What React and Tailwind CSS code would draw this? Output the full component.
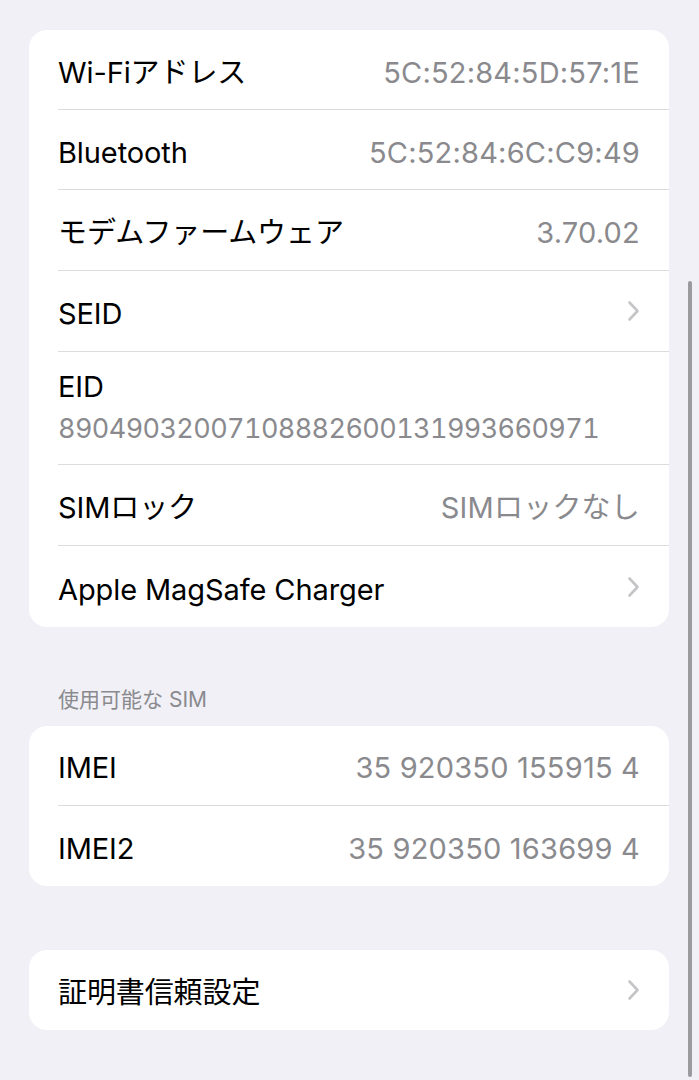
import React from "react";

const font = { fontFamily: "Inter, 'Noto Sans CJK JP', sans-serif" };

function Chevron() {
    return (
        <svg width="13" height="22" viewBox="0 0 13 22" fill="none" className="shrink-0 -mt-[6px]">
            <path d="M2.5 2.5L10.5 11L2.5 19.5" stroke="#c5c5c8" strokeWidth="2.6" strokeLinecap="round" strokeLinejoin="round" />
        </svg>
    );
}

function Row({ label, value, chevron, last, h = "h-[80px]" }) {
    return (
        <div className="pl-[29px]">
            <div className={"flex items-center justify-between pt-[6px] pr-[29px] " + h + " " + (last ? "" : "border-b border-[#dcdce0]")}>
                <span className="text-[29px] text-black tracking-[-0.1px]">{label}</span>
                {value && <span className="text-[29px] text-[#8a8a8e] tracking-[0.2px]">{value}</span>}
                {chevron && <Chevron />}
            </div>
        </div>
    );
}

export default function App() {
    return (
        <div className="relative min-h-[1080px] bg-[#f0f0f6] pt-[30px] pl-[29px] pr-[30px] pb-[50px]" style={font}>
            <div className="bg-white rounded-[18px] overflow-hidden">
                <Row label="Wi-Fiアドレス" value="5C:52:84:5D:57:1E" />
                <Row label="Bluetooth" value="5C:52:84:6C:C9:49" />
                <Row label="モデムファームウェア" value="3.70.02" h="h-[81px]" />
                <Row label="SEID" chevron h="h-[81px]" />
                <div className="pl-[29px]">
                    <div className="h-[113px] flex flex-col justify-center pt-[3px] border-b border-[#dcdce0] pr-[29px]">
                        <span className="text-[29px] text-black leading-[36px] tracking-[-0.1px]">EID</span>
                        <span className="text-[27px] text-[#8a8a8e] leading-[42px] pt-[3px] tabular-nums tracking-[-0.6px]">
                            89049032007108882600131993660971
                        </span>
                    </div>
                </div>
                <Row label="SIMロック" value="SIMロックなし" h="h-[81px]" />
                <Row label="Apple MagSafe Charger" chevron last h="h-[81px]" />
            </div>

            <div className="pl-[29px] pt-[57px] pb-[10px] text-[21px] text-[#8a8a8e]">使用可能な SIM</div>

            <div className="bg-white rounded-[18px] overflow-hidden">
                <Row label="IMEI" value="35 920350 155915 4" />
                <Row label="IMEI2" value="35 920350 163699 4" last />
            </div>

            <div className="bg-white rounded-[18px] overflow-hidden mt-[64px]">
                <Row label="証明書信頼設定" chevron last />
            </div>

            <div className="absolute left-[688px] top-[281px] w-[4px] h-[796px] rounded-full bg-[#9a9a9f]" />
        </div>
    );
}
